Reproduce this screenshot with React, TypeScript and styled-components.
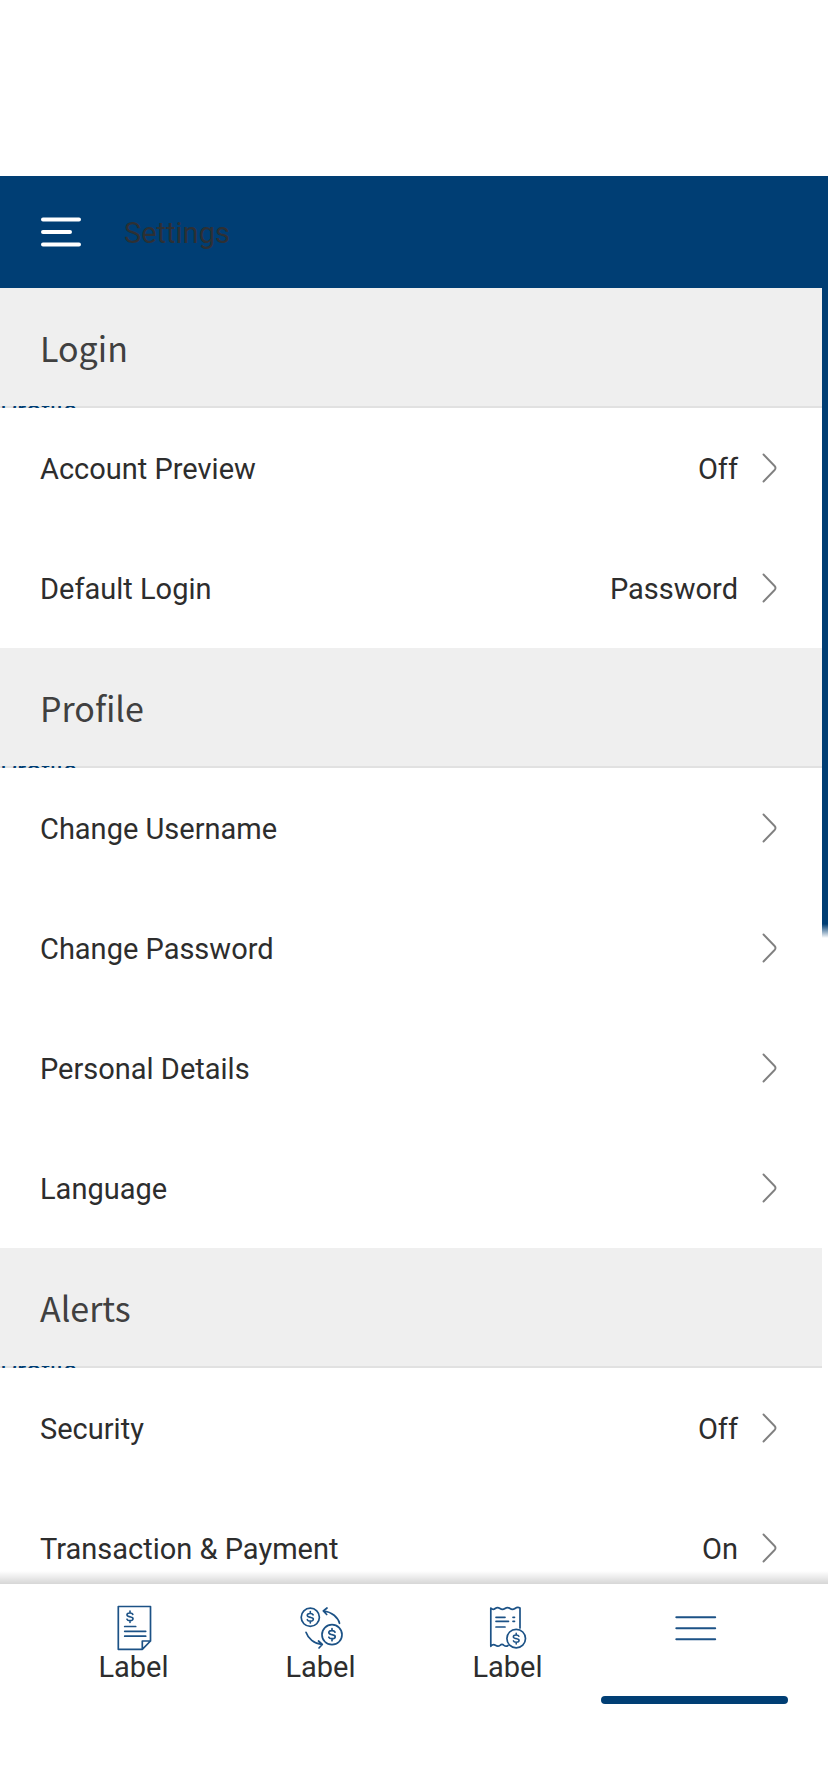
import React from "react";
import styled, { createGlobalStyle } from "styled-components";

const Global = createGlobalStyle`
  * { box-sizing: border-box; }
  body { margin: 0; background: #fff; font-family: Roboto, sans-serif; color: #2d2d2d; }
`;

const Screen = styled.div`
  width: 828px;
  height: 1792px;
  padding-top: 176px;
  display: flex;
  flex-direction: column;
  overflow: hidden;
  background: #fff;
`;

const TopBar = styled.header`
  height: 112px;
  flex: none;
  display: flex;
  align-items: center;
  padding: 0 41px;
  gap: 42px;
  background: #003e74;
`;

const Title = styled.h1`
  margin: 2px 0 0;
  padding-left: 1px;
  font-size: 29px;
  font-weight: 400;
  line-height: 36px;
  color: #2d3034;
`;

const Body = styled.div`
  height: 1296px;
  flex: none;
  display: flex;
  overflow: hidden;
`;

const List = styled.main`
  width: 822px;
`;

const ScrollThumb = styled.div`
  width: 6px;
  height: 650px;
  background: linear-gradient(#003e74 636px, #fff 650px);
`;

const SectionHead = styled.div`
  height: 120px;
  display: flex;
  flex-direction: column;
  justify-content: space-between;
  background: #efefef;
`;

const SectionTitle = styled.h2`
  margin: 0;
  padding: 35px 0 0 40px;
  font: 400 34px/50px "Noto Sans CJK SC", "Noto Sans", sans-serif;
  color: #404040;
`;

const Divider = styled.div`
  height: 2px;
  overflow: hidden;
  background: #e1e1e1;
  font-size: 27px;
  line-height: 24px;
  color: #003e74;
`;

const ClippedText = styled.span`
  display: block;
  margin-top: -7px;
`;

const Row = styled.div`
  height: 120px;
  padding: 0 45px 0 40px;
  display: flex;
  align-items: center;
  font-size: 29px;
  line-height: 36px;
`;

const RowLabel = styled.span`
  flex: 1;
  padding-top: 2px;
`;

const RowValue = styled.span`
  padding: 2px 24px 0 0;
`;

const TabBar = styled.nav`
  position: relative;
  height: 208px;
  flex: none;
  display: flex;
  padding: 0 40px;
  background: #fff;
  &::before {
    content: "";
    position: absolute;
    left: 0;
    right: 0;
    top: -13px;
    height: 13px;
    background: linear-gradient(rgba(0, 0, 0, 0), rgba(0, 0, 0, 0.16));
  }
`;

const Tab = styled.div`
  width: 187px;
  height: 120px;
  display: flex;
  flex-direction: column;
  align-items: center;
  padding-top: 20px;
`;

const TabIcon = styled.svg`
  width: 48px;
  height: 48px;
  flex: none;
  fill: none;
  stroke: #1c5286;
  stroke-width: 1.7;
  stroke-linecap: round;
  stroke-linejoin: round;
`;

const TabLabel = styled.span`
  font-size: 29px;
  line-height: 34px;
  margin-top: -2px;
`;

const ActiveLine = styled.div`
  width: 187px;
  height: 8px;
  flex: none;
  margin-top: 44px;
  border-radius: 4px;
  background: #003e74;
`;

const Chevron = () => (
  <svg width="15" height="30" viewBox="0 0 15 30" fill="none" stroke="#808080" strokeWidth="1.9" strokeLinecap="round" strokeLinejoin="round">
    <path d="M1.5 1.5 12.6 13Q14.4 15 12.6 17L1.5 28.5" />
  </svg>
);

const MenuIcon = () => (
  <svg width="40" height="32" viewBox="0 0 40 32" stroke="#fff" strokeWidth="4" strokeLinecap="round">
    <path d="M2 3.5H38M2 16H29M2 28.5H38" />
  </svg>
);

const Dollar = ({ x, y, s = 1 }: { x: number; y: number; s?: number }) => (
  <path
    transform={`translate(${x} ${y}) scale(${s})`}
    d="M3-2.6C2.5-3.8 1.3-4 0-4C-4-4-4.2-.6-.8-.2L.8.2C4.2.8 4 4 0 4C-1.6 4-2.8 3.6-3.2 2.5M0-6V-4M0 4V6"
  />
);

const StatementIcon = () => (
  <TabIcon viewBox="0 0 48 48">
    <path d="M8.3 2.5H40.5V37L32.3 45.3H8.3ZM32.3 45.3V37H40.5" />
    <path d="M14.7 22.5H25.7M14.7 27.3H35.7M14.7 32.2H35.7" />
    <Dollar x={20} y={12.8} s={0.95} />
  </TabIcon>
);

const TransferIcon = () => (
  <TabIcon viewBox="0 0 48 48">
    <circle cx="13.3" cy="13.3" r="9.1" />
    <circle cx="35" cy="30.7" r="10" />
    <path d="M42.5 19.3C41 13.5 35 7.8 26.5 7M30 4 26.3 7 29.7 10.5" />
    <path d="M9 28.3C11 34.3 17 40 25 40.5M21.5 37 25.3 40.5 22 44" />
    <Dollar x={13.3} y={13.3} s={0.95} />
    <Dollar x={35} y={30.7} />
  </TabIcon>
);

const BillIcon = () => (
  <TabIcon viewBox="0 0 48 48">
    <path d="M24 41.5Q22 43 20 41.3Q18 39.5 16 41.3Q14 43 11.5 41.3Q9 39.5 6.8 42.3V4Q9 6.3 11.2 4.5Q13.5 2.7 16 4.5Q18.5 6.3 21 4.5Q23.5 2.7 26 4.5Q28.5 6.3 31 4.5Q33.5 2.7 36 4V24" />
    <path d="M12 13.3H21M12 17.3H24.5M12 23H21M29 13.3H30.5M29 17.3H30.5" />
    <circle cx="32.2" cy="34.6" r="9.3" />
    <Dollar x={32.2} y={34.6} s={0.9} />
  </TabIcon>
);

const MoreIcon = () => (
  <TabIcon viewBox="0 0 48 48">
    <path strokeWidth="2" d="M5.3 13.3H44.2M5.3 24.3H44.2M5.3 35.2H44.2" />
  </TabIcon>
);

const sections: { title: string; rows: { label: string; value?: string }[] }[] = [
  { title: "Login", rows: [{ label: "Account Preview", value: "Off" }, { label: "Default Login", value: "Password" }] },
  { title: "Profile", rows: [{ label: "Change Username" }, { label: "Change Password" }, { label: "Personal Details" }, { label: "Language" }] },
  { title: "Alerts", rows: [{ label: "Security", value: "Off" }, { label: "Transaction & Payment", value: "On" }] },
];

export default function App() {
  return (
    <Screen>
      <Global />
      <TopBar>
        <MenuIcon />
        <Title>Settings</Title>
      </TopBar>
      <Body>
        <List>
          {sections.map((s) => (
            <section key={s.title}>
              <SectionHead>
                <SectionTitle>{s.title}</SectionTitle>
                <Divider>
                  <ClippedText>Profile</ClippedText>
                </Divider>
              </SectionHead>
              {s.rows.map((r) => (
                <Row key={r.label}>
                  <RowLabel>{r.label}</RowLabel>
                  {r.value && <RowValue>{r.value}</RowValue>}
                  <Chevron />
                </Row>
              ))}
            </section>
          ))}
        </List>
        <ScrollThumb />
      </Body>
      <TabBar>
        <Tab>
          <StatementIcon />
          <TabLabel>Label</TabLabel>
        </Tab>
        <Tab>
          <TransferIcon />
          <TabLabel>Label</TabLabel>
        </Tab>
        <Tab>
          <BillIcon />
          <TabLabel>Label</TabLabel>
        </Tab>
        <Tab>
          <MoreIcon />
          <ActiveLine />
        </Tab>
      </TabBar>
    </Screen>
  );
}
